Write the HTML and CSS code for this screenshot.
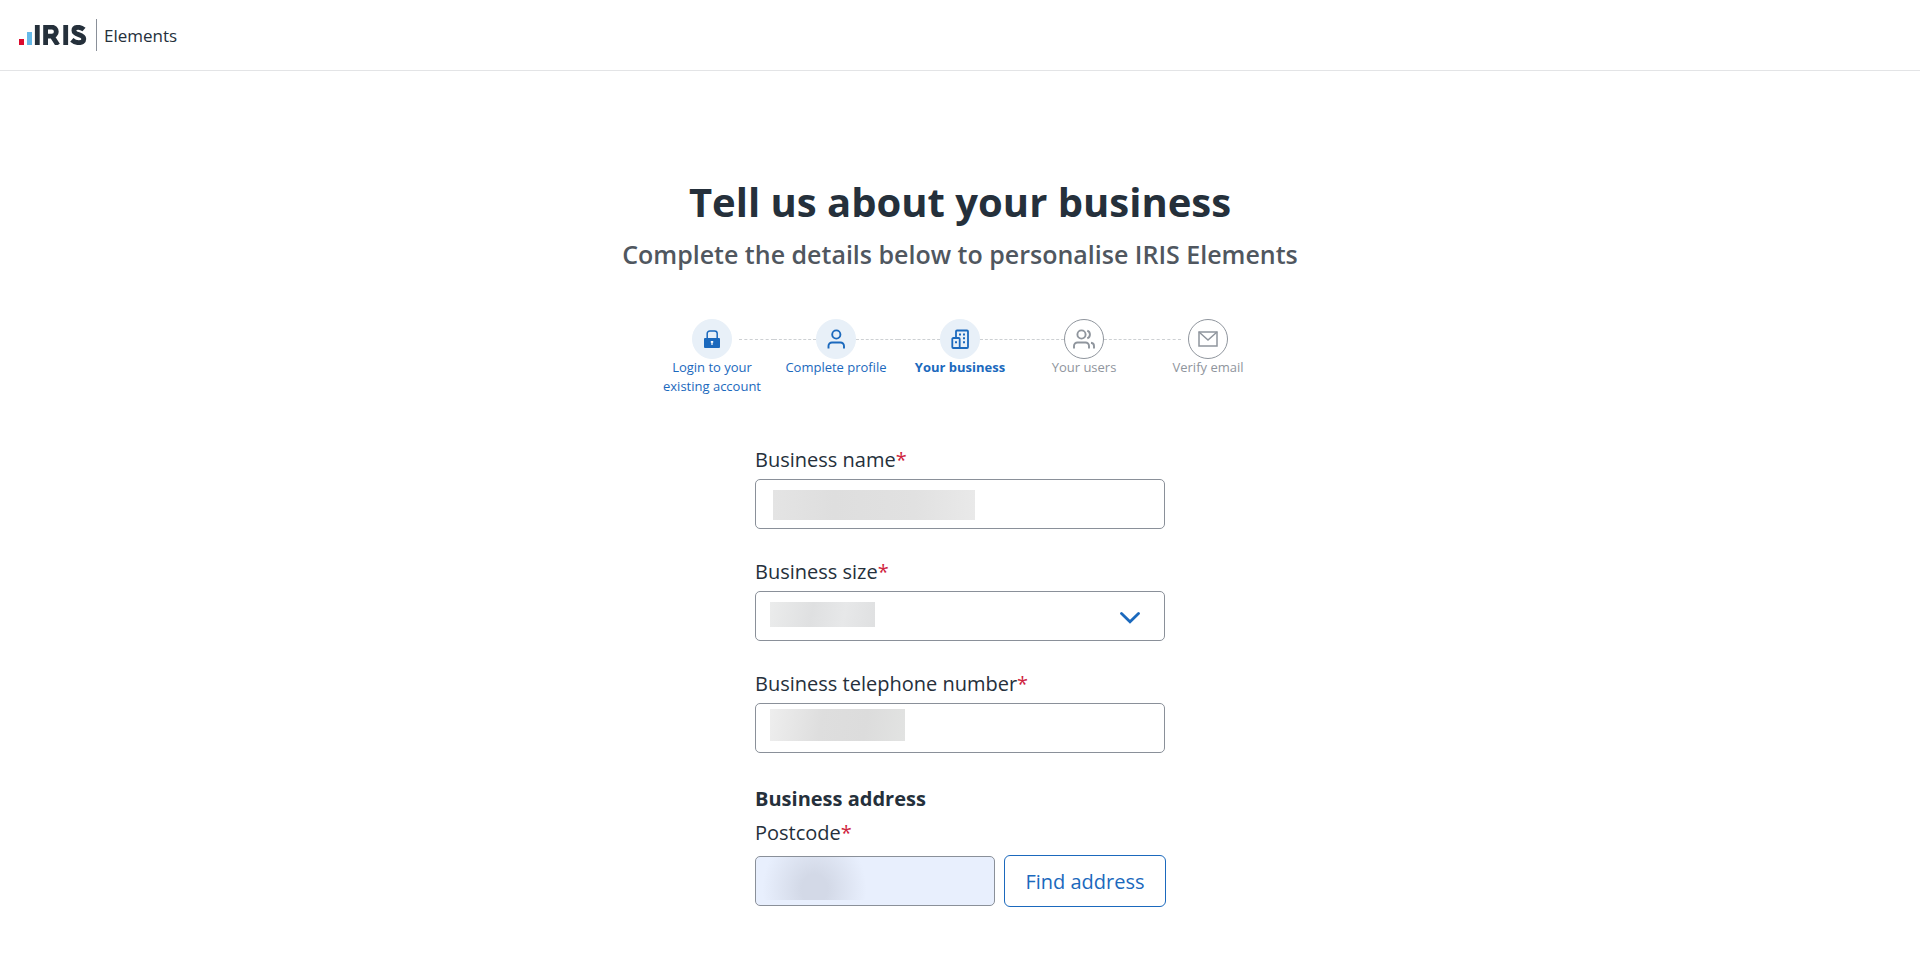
FILE: index.html
```html
<!DOCTYPE html>
<html lang="en">
<head>
    <meta charset="UTF-8">
    <meta name="viewport" content="width=device-width, initial-scale=1.0">
    <title>Tell us about your business</title>
    <link rel="stylesheet" href="styles.css">
</head>
<body>
    <header class="header">
        <svg class="logo" width="68" height="20" viewBox="0 0 68 20" role="img" aria-label="IRIS">
            <rect x="0" y="14" width="5" height="6" fill="#dc0a2d"/>
            <rect x="8" y="7" width="5" height="13" fill="#66b9e8"/>
            <g fill="none" stroke="#25303b" stroke-width="4.8">
                <path d="M18.300 0v20M46.700 0v20"/>
                <path d="M26.600 20V2.200h6.200a4.500 4.500 0 0 1 0 9H26.600M33 11l5.800 9"/>
                <path d="M65 4.500C63.200 3 61.200 2.300 59.200 2.300c-2.700 0-4.300 1.200-4.300 3.200 0 5.400 9.900 2.800 9.900 8.500 0 2.300-2 3.700-5 3.700-2.700 0-5-1-7-2.800"/>
            </g>
        </svg>
        <span class="product">Elements</span>
    </header>

    <main class="page">
        <h1>Tell us about your business</h1>
        <h2>Complete the details below to personalise IRIS Elements</h2>

        <ol class="steps">
            <li class="step done">
                <div class="marker">
                    <span class="circle">
                        <svg width="20" height="20" viewBox="0 0 20 20">
                            <path d="M5.200 9V4.500a2.600 2.600 0 0 1 2.600-2.600h4.800a2.600 2.600 0 0 1 2.600 2.600V9" fill="none" stroke="currentColor" stroke-width="1.500"/>
                            <rect x="2" y="9" width="16" height="10" rx="1" fill="currentColor"/>
                            <path d="M8.800 12h2.400v1.800h-.6v2.200h-1.200v-2.200h-.6z" fill="#fff"/>
                        </svg>
                    </span>
                </div>
                <span class="step-label">Login to your<br>existing account</span>
            </li>
            <li class="step done">
                <div class="marker">
                    <span class="circle">
                        <svg width="20" height="20" viewBox="0 0 20 20" fill="none" stroke="currentColor" stroke-width="1.900">
                            <circle cx="10.300" cy="5.500" r="4.100"/>
                            <path d="M2.500 19.500V17a3.500 3.500 0 0 1 3.500-3.500h8.500a3.500 3.500 0 0 1 3.500 3.500v2.500"/>
                        </svg>
                    </span>
                </div>
                <span class="step-label">Complete profile</span>
            </li>
            <li class="step current" aria-current="step">
                <div class="marker">
                    <span class="circle">
                        <svg width="20" height="20" viewBox="0 0 20 20" fill="none" stroke="currentColor" stroke-width="1.800">
                            <path d="M6 9V2.500a1 1 0 0 1 1-1h10a1 1 0 0 1 1 1V18a1 1 0 0 1-1 1H3.300a1 1 0 0 1-1-1V10a1 1 0 0 1 1-1h5.400a1 1 0 0 1 1 1v9"/>
                            <path d="M9 5.400h2M13 5.400h2M13 9.300h2M13 13.300h2M5 13.300h2" stroke-width="2"/>
                        </svg>
                    </span>
                </div>
                <span class="step-label">Your business</span>
            </li>
            <li class="step">
                <div class="marker">
                    <span class="circle">
                        <svg width="24" height="20" viewBox="0 0 24 20" fill="none" stroke="currentColor" stroke-width="1.900">
                            <circle cx="9.500" cy="5.500" r="4.100"/>
                            <path d="M2 19.500V17a3.500 3.500 0 0 1 3.500-3.500h8a3.500 3.500 0 0 1 3.500 3.500v2.500"/>
                            <path d="M15.300 1.600a4.200 4.200 0 0 1 0 7.800M19 13.700a3.400 3.400 0 0 1 3 3.400v2.400"/>
                        </svg>
                    </span>
                </div>
                <span class="step-label">Your users</span>
            </li>
            <li class="step">
                <div class="marker">
                    <span class="circle">
                        <svg width="20" height="16" viewBox="0 0 20 16" fill="none" stroke="currentColor" stroke-width="1.500">
                            <rect x="1" y="1" width="18" height="14"/>
                            <path d="M1 1l9 8 9-8"/>
                        </svg>
                    </span>
                </div>
                <span class="step-label">Verify email</span>
            </li>
        </ol>

        <form class="form">
            <div class="field">
                <label for="businessName">Business name<span class="required">*</span></label>
                <input type="text" id="businessName" class="control name" required>
            </div>

            <div class="field">
                <label for="businessSize">Business size<span class="required">*</span></label>
                <div class="select-wrap">
                    <select id="businessSize" class="control size" required>
                        <option value=""></option>
                    </select>
                    <svg class="chevron" width="20" height="12" viewBox="0 0 20 12">
                        <path d="M1.500 1.500L10 9.800l8.500-8.300" fill="none" stroke="currentColor" stroke-width="2.800" stroke-linecap="round"/>
                    </svg>
                </div>
            </div>

            <div class="field">
                <label for="telephone">Business telephone number<span class="required">*</span></label>
                <input type="tel" id="telephone" class="control telephone" required>
            </div>

            <h3>Business address</h3>
            <label for="postcode">Postcode<span class="required">*</span></label>
            <div class="postcode-row">
                <input type="text" id="postcode" class="control postcode" required>
                <button type="button" class="find">Find address</button>
            </div>
        </form>
    </main>
</body>
</html>
```
FILE: styles.css
```css
* { box-sizing: border-box; }
body {
    font-family: 'Open Sans', sans-serif;
    background: #fff;
    color: #25303b;
    margin: 0;
}
.header {
    display: flex;
    align-items: center;
    height: 71px;
    padding: 0 19px;
    border-bottom: 1px solid #e3e4e6;
}
.product {
    display: flex;
    align-items: center;
    height: 32px;
    margin-left: 9px;
    padding-left: 7px;
    border-left: 1px solid #8a9099;
    font-size: 17px;
}
.page {
    padding: 104px 20px 48px;
    text-align: center;
}
h1 {
    margin: 0;
    font-size: 40px;
    line-height: 54px;
    font-weight: 700;
}
h2 {
    margin: 8px 0 0;
    font-size: 25px;
    line-height: 34px;
    font-weight: 600;
    color: #50575f;
}

/* progress steps */
.steps {
    display: flex;
    max-width: 620px;
    margin: 48px auto 0;
    padding: 0;
    list-style: none;
}
.step {
    flex: 1;
    color: #8f959d;
    font-size: 13px;
    line-height: 19px;
}
.marker {
    display: flex;
    align-items: center;
}
.marker::before, .marker::after {
    content: "";
    flex: 1;
    border-top: 1px dashed #cdd0d3;
}
.step:first-child .marker::before, .step:last-child .marker::after { border-color: transparent; }
.step:first-child .circle, .step:last-child .circle { margin: 0 7px; }
.circle {
    display: flex;
    align-items: center;
    justify-content: center;
    width: 40px;
    height: 40px;
    border: 1px solid #8f959d;
    border-radius: 50%;
}
.step-label {
    display: block;
    margin-top: -1px;
}
.done, .current { color: #1b69bd; }
.done .circle, .current .circle {
    background: #e8f0f8;
    border-color: #e8f0f8;
}
.current .step-label { font-weight: 700; }

/* form */
.form {
    max-width: 410px;
    margin: 50px auto 0;
    text-align: left;
}
.field { margin-bottom: 29px; }
label {
    display: block;
    margin-bottom: 5px;
    font-size: 20px;
    line-height: 28px;
}
.required { color: #cf2440; }
.control {
    display: block;
    width: 100%;
    height: 50px;
    padding: 0 16px;
    border: 1px solid #8a9099;
    border-radius: 5px;
    background-color: #fff;
    background-repeat: no-repeat;
    font: inherit;
    font-size: 20px;
    color: inherit;
    appearance: none;
}
.name {
    background-image: linear-gradient(90deg, #e4e4e4, #dedede 30%, #e1e1e1 70%, #e9e9e9);
    background-size: 202px 30px;
    background-position: 17px 10px;
}
.size {
    background-image: linear-gradient(100deg, #ebecec, #dfe0e1 40%, #e7e8e9 70%, #dfe0e1);
    background-size: 105px 25px;
    background-position: 14px 10px;
}
.telephone {
    background-image: linear-gradient(100deg, #eeeeee, #dedede 38%, #dcdcdc 70%, #e2e3e2);
    background-size: 135px 32px;
    background-position: 14px 5px;
}
.postcode {
    background-color: #e8effd;
    background-image: radial-gradient(ellipse 52px 60px at 50% 75%, #d3d9e7 25%, #e8effd00);
    background-size: 105px 43px;
    background-position: 6px 0;
}
.select-wrap {
    display: grid;
    align-items: center;
}
.select-wrap > * { grid-area: 1 / 1; }
.chevron {
    justify-self: end;
    margin-right: 25px;
    margin-top: 4px;
    color: #1b69bd;
    pointer-events: none;
}
h3 {
    margin: 32px 0 6px;
    font-size: 20px;
    line-height: 28px;
    font-weight: 700;
}
.postcode-row {
    display: flex;
    align-items: center;
    gap: 9px;
    margin: 8px -1px 0 0;
}
.postcode-row .control { flex: 1; }
.find {
    width: 162px;
    height: 52px;
    border: 1px solid #1b69bd;
    border-radius: 6px;
    background: #fff;
    color: #1b69bd;
    font: inherit;
    font-size: 20px;
}
```
